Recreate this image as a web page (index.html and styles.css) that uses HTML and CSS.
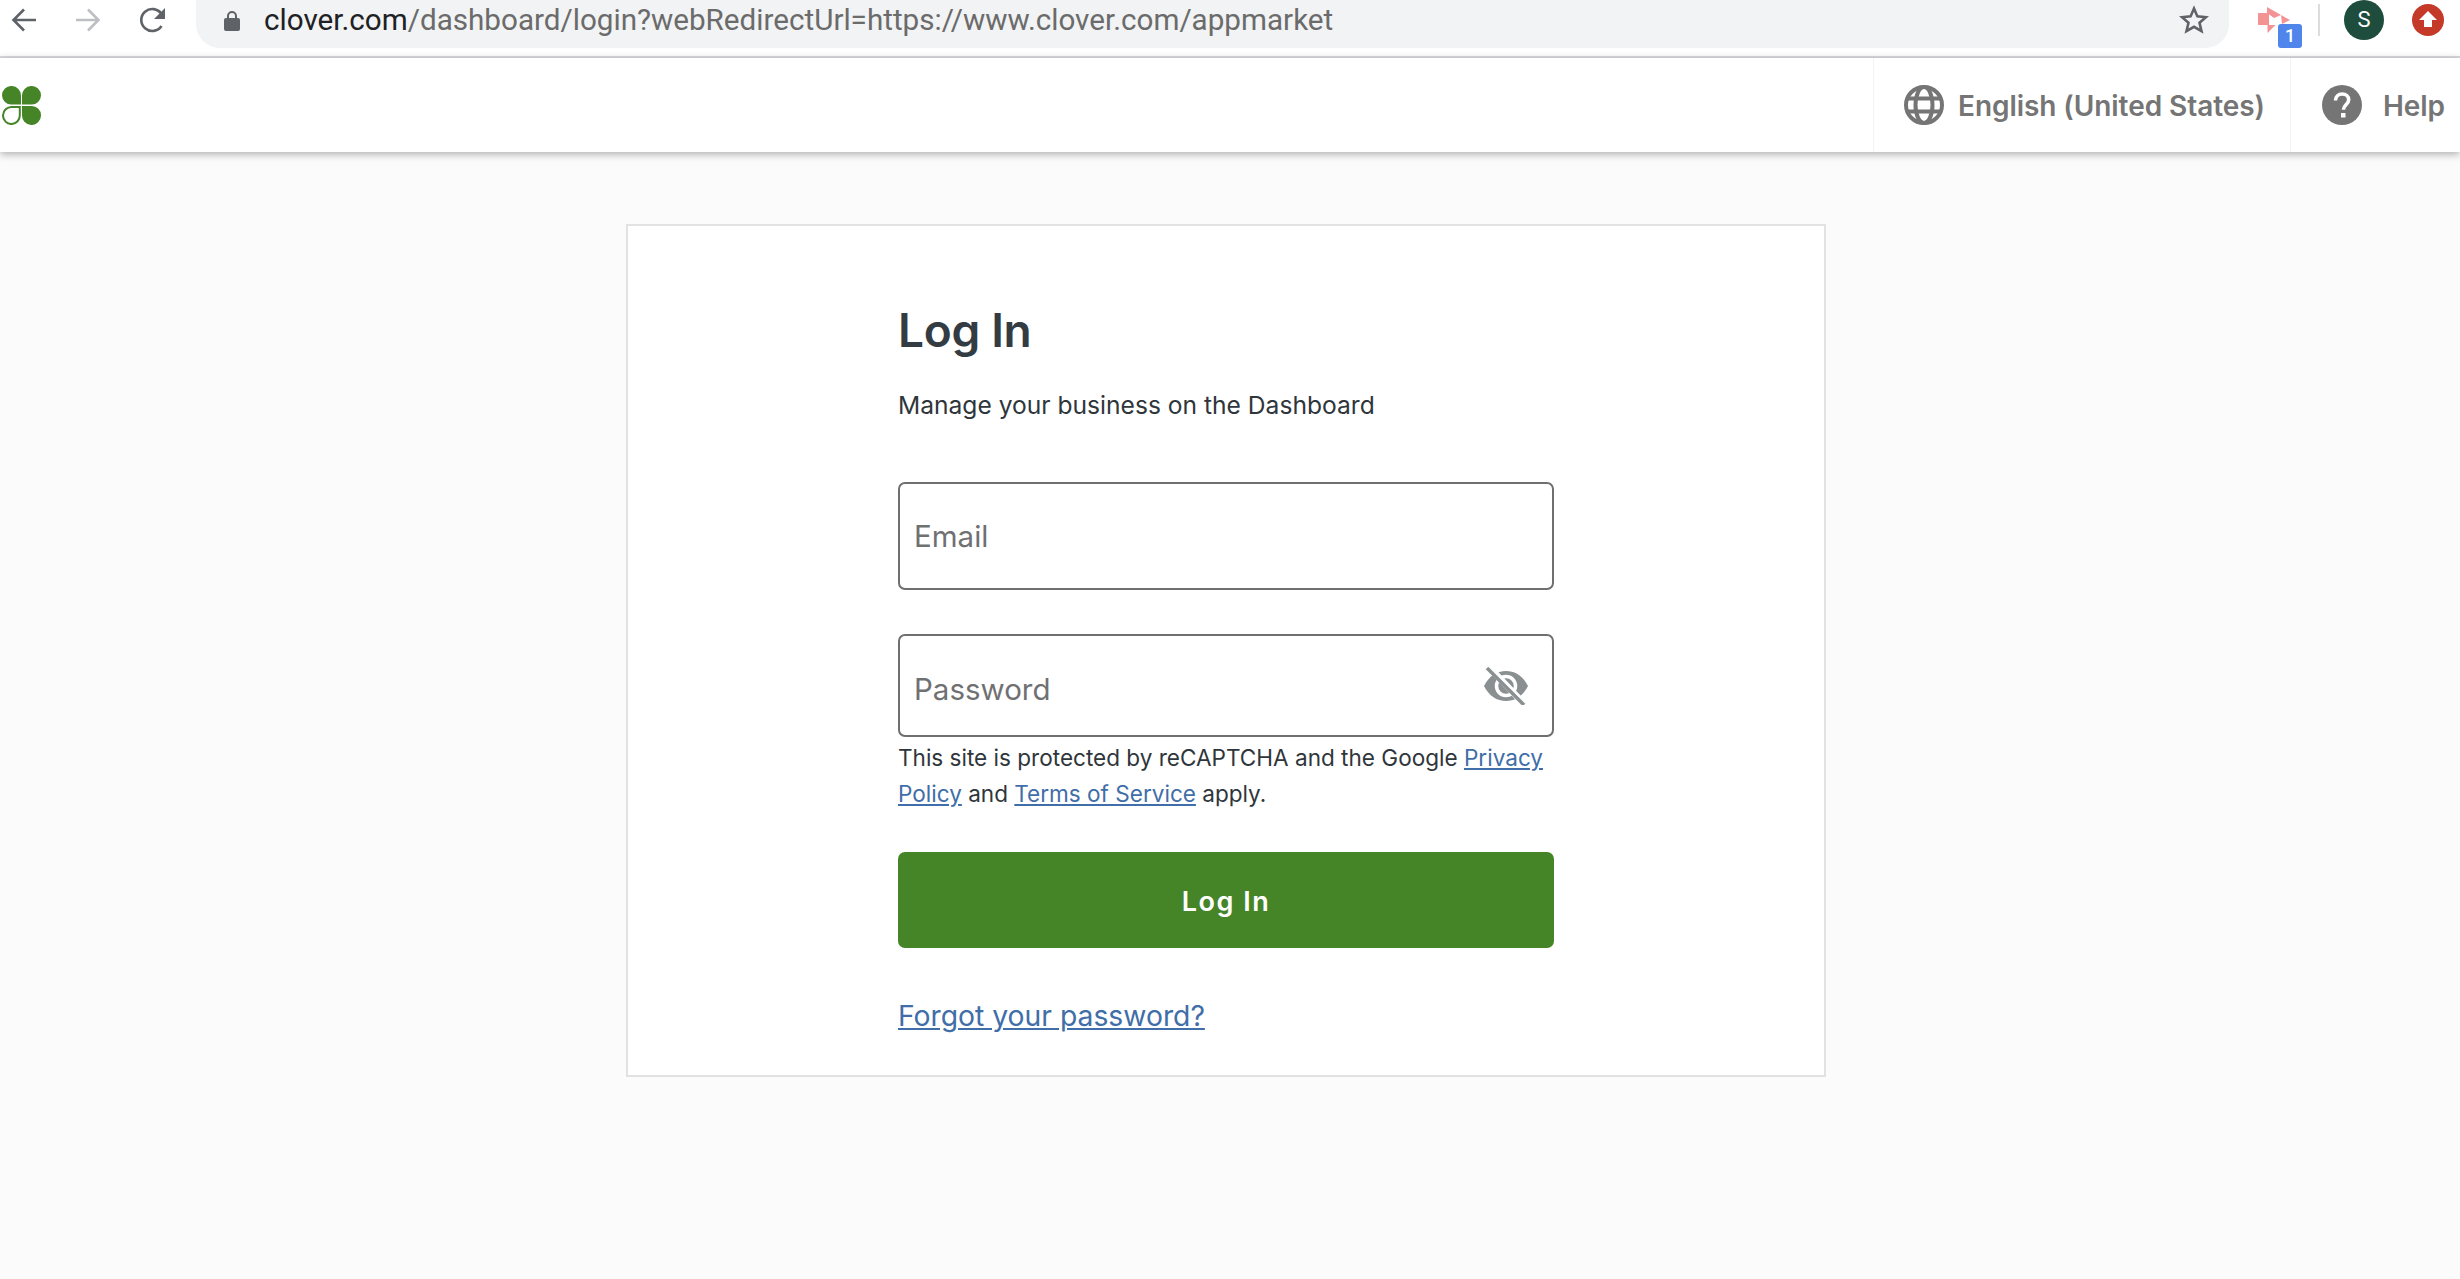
FILE: index.html
```html
<!DOCTYPE html>
<html lang="en">
<head>
<meta charset="utf-8">
<title>Clover Login</title>
<link rel="stylesheet" href="styles.css">
</head>
<body>
<div class="chrome">
  <svg class="nav nav-back" viewBox="0 0 26 26"><path d="M25 13H3M13 2.5 2.5 13 13 23.5" fill="none" stroke="#5f6368" stroke-width="2.6"/></svg>
  <svg class="nav nav-forward" viewBox="0 0 26 26"><path d="M1 13h22M13 2.5 23.5 13 13 23.5" fill="none" stroke="#bdbfc2" stroke-width="2.6"/></svg>
  <svg class="nav nav-reload" viewBox="0 0 26 26"><path d="M21.5 19a11 11 0 1 1 0-12" fill="none" stroke="#5f6368" stroke-width="2.6"/><path d="M25 1v11H14z" fill="#5f6368"/></svg>
  <div class="omnibox">
    <svg class="lock" viewBox="0 0 16 21"><path d="M4 9V6a4 4 0 0 1 8 0v3" fill="none" stroke="#5f6368" stroke-width="2"/><rect y="8" width="16" height="13" rx="2" fill="#5f6368"/></svg>
    <div class="url"><span class="url-host">clover.com</span>/dashboard/login?webRedirectUrl=https://www.clover.com/appmarket</div>
    <svg class="star" viewBox="0 0 30 30"><path d="M15 3.5l3.4 7.9 8.6.8-6.5 5.6 2 8.4-7.500-4.400-7.500 4.400 2-8.400L3 12.200l8.600-.8z" fill="none" stroke="#5f6368" stroke-width="2.600"/></svg>
  </div>
  <div class="ext">
    <svg class="ext-icon" viewBox="0 0 32 32"><path d="M9 1l14 8-7 3-7-5zM0 7h11v12H0zM23 9l9 5-8 4zM9.500 19h8l-8 8z" fill="#f49393"/></svg>
    <span class="ext-badge">1</span>
  </div>
  <div class="tb-divider"></div>
  <div class="avatar">S</div>
  <svg class="update" viewBox="0 0 32 32"><circle cx="16" cy="16" r="16" fill="#c53929"/><path d="M16 7l9 9h-5v7h-8v-7H7z" fill="#fff"/></svg>
</div>

<header class="site-header">
  <svg class="logo" viewBox="0 0 39 39"><path d="M10 0a9.500 9.500 0 0 1 9 9.500V18.500H9.500A9.300 9.300 0 0 1 0 9.500 9.500 9.500 0 0 1 10 0z" fill="#458527"/><path d="M29 0a9.500 9.500 0 0 0-9 9.500V18.500h9.500A9.300 9.300 0 0 0 39 9.500 9.500 9.500 0 0 0 29 0z" fill="#458527"/><path d="M10 38a8.500 8.500 0 0 1-9-8.800 8.500 8.500 0 0 1 8.800-8.200H17.800V29.500A8.500 8.500 0 0 1 10 38z" fill="none" stroke="#458527" stroke-width="2"/><path d="M29 39a9.500 9.500 0 0 0 10-9.700 9.300 9.300 0 0 0-9.700-9.300H20V29.500A9.500 9.500 0 0 0 29 39z" fill="#458527"/></svg>
  <div class="header-actions">
    <div class="header-item item-lang">
      <svg class="hicon" viewBox="0 0 40 40"><g fill="none" stroke="#757575" stroke-width="4"><circle cx="20" cy="20" r="18"/><ellipse cx="20" cy="20" rx="8.500" ry="18"/><path d="M3 13.500h34M3 26.500h34"/></g></svg>
      <span class="hlabel">English (United States)</span>
    </div>
    <div class="header-item item-help">
      <svg class="hicon" viewBox="0 0 40 40"><circle cx="20" cy="20" r="20" fill="#757575"/><path d="M13.500 15.500c0-4 3-6.500 6.700-6.500s6.500 2.300 6.500 5.700c0 4.800-5.200 4.800-5.200 10" fill="none" stroke="#fff" stroke-width="3.600"/><rect x="19" y="28" width="4.500" height="4.500" fill="#fff"/></svg>
      <span class="hlabel">Help</span>
    </div>
  </div>
</header>

<main class="page">
  <section class="card">
    <h1 class="title">Log In</h1>
    <p class="subtitle">Manage your business on the Dashboard</p>
    <form class="form">
      <div class="field field-email"><span class="placeholder">Email</span></div>
      <div class="field field-password">
        <span class="placeholder placeholder-low">Password</span>
        <svg class="eye" viewBox="0 0 44 38"><path d="M0 19C5 9 13 4 22 4s17 5 22 15c-5 10-13 15-22 15S5 29 0 19z" fill="#8a8f92"/><circle cx="22" cy="19" r="9.500" fill="none" stroke="#fff" stroke-width="3.500"/><path d="M5 0l36 38" stroke="#fff" stroke-width="6.500"/><path d="M3 1l37 37" stroke="#8a8f92" stroke-width="3.500"/></svg>
      </div>
      <p class="legal">This site is protected by reCAPTCHA and the Google <a href="#">Privacy</a> <a href="#">Policy</a> and <a href="#">Terms of Service</a> apply.</p>
      <button class="submit" type="button">Log In</button>
    </form>
    <a class="forgot" href="#">Forgot your password?</a>
  </section>
</main>
</body>
</html>
```

FILE: styles.css
```css
* { box-sizing: border-box; }
html, body { margin: 0; padding: 0; }
body { height: 1279px; overflow: hidden; background: #fbfbfb; font-family: "Inter", "Liberation Sans", sans-serif; }

.chrome { height: 58px; background: #fff; border-bottom: 2px solid #dadce0; display: flex; align-items: flex-start; padding-left: 11px; }
.nav { width: 26px; height: 26px; margin-top: 7px; flex: none; }
.nav-forward { margin-left: 38px; }
.nav-reload { margin-left: 39px; }
.omnibox { width: 2033px; height: 48px; margin-left: 30px; background: #f1f3f4; border-radius: 0 0 24px 24px; display: flex; align-items: flex-start; padding-left: 28px; }
.lock { width: 16px; height: 21px; margin-top: 10px; flex: none; }
.url { margin-left: 24px; font: 400 29.630px/40px "Roboto", sans-serif; color: #6b6b6b; white-space: nowrap; flex: 1; }
.url-host { color: #202124; }
.star { width: 30px; height: 30px; margin: 5px 20px 0 0; flex: none; }
.ext { position: relative; width: 32px; height: 48px; margin-left: 29px; flex: none; }
.ext-icon { width: 32px; height: 32px; margin-top: 6px; display: block; }
.ext-badge { position: absolute; left: 20px; top: 24px; width: 24px; height: 24px; border-radius: 3px; background: #5086ec; color: #fff; font: 500 18px/24px "Roboto", sans-serif; text-align: center; }
.tb-divider { width: 2px; height: 32px; margin: 4px 0 0 28px; background: #dadce0; flex: none; }
.avatar { width: 40px; height: 40px; margin-left: 24px; border-radius: 50%; background: #1e4d3d; color: #fff; font: 400 22px/40px "Roboto", sans-serif; text-align: center; flex: none; }
.update { width: 32px; height: 32px; margin: 4px 0 0 28px; flex: none; }

.site-header { height: 94px; background: #fff; box-shadow: 0 2px 8px rgba(0,0,0,.32); display: flex; align-items: center; justify-content: space-between; padding-left: 2px; position: relative; }
.logo { width: 39px; height: 39px; display: block; }
.header-actions { display: flex; height: 100%; }
.header-item { display: flex; align-items: center; border-left: 1px solid #f3f3f3; }
.item-lang { width: 417px; padding-left: 30px; }
.item-help { width: 170px; padding-left: 31px; }
.hicon { width: 40px; height: 40px; flex: none; }
.hlabel { padding-top: 1px; font-size: 28px; font-weight: 600; color: #757575; white-space: nowrap; letter-spacing: -.06px; }
.item-lang .hlabel { margin-left: 14px; }
.item-help .hlabel { margin-left: 21px; }

.page { padding: 72px 0 0 626px; }
.card { width: 1200px; height: 853px; background: #fff; border: 2px solid #e2e2e2; padding: 77px 270px 0; }
.title { margin: 0; font-size: 46px; line-height: 54px; font-weight: 600; color: #343c43; letter-spacing: -.3px; }
.subtitle { margin: 32px 0 0; font-size: 24.600px; line-height: 32px; color: #2f363b; }
.form { margin-top: 61px; }
.field { border: 2px solid #6f6f6f; border-radius: 7px; display: flex; align-items: center; justify-content: space-between; background: #fff; }
.field-email { height: 108px; padding-left: 14px; }
.field-password { height: 103px; margin-top: 44px; padding: 0 24px 0 14px; }
.placeholder { font-size: 29.500px; color: #6f7072; }
.placeholder-low { padding-top: 6px; }
.eye { width: 44px; height: 38px; flex: none; }
.legal { margin: 3px 0 0; font-size: 22.550px; line-height: 36px; color: #2f363b; }
.legal a, .forgot { color: #3f6ea8; text-decoration: underline; }
.submit { display: block; width: 656px; height: 96px; margin-top: 40px; padding: 4px 0 0; border: 0; border-radius: 7px; background: #468527; color: #fff; font: 600 27px/32px "Inter", sans-serif; letter-spacing: 1.500px; }
.forgot { display: block; width: max-content; margin-top: 49px; font-size: 28.300px; line-height: 38px; }
```
